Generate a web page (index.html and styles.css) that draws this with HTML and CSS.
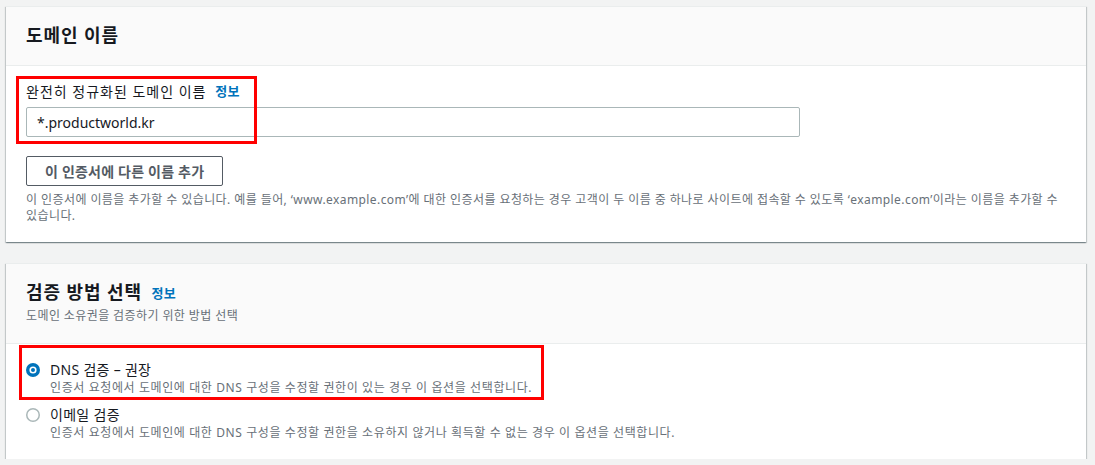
FILE: index.html
```html
<!DOCTYPE html>
<html lang="ko">
	<head>
		<meta charset="UTF-8">
		<meta name="viewport" content="width=device-width, initial-scale=1.0">
		<title>인증서 요청</title>
		<link rel="stylesheet" href="styles.css">
	</head>
	<body>
		<main class="page">
			<section class="card">
				<header class="card-head">
					<h2>도메인 이름</h2>
				</header>
				<div class="card-body">
					<div class="field">
						<span class="mark mark-name"></span>
						<label class="field-label" for="domain">완전히 정규화된 도메인 이름 <a class="info" href="#">정보</a></label>
						<input class="text-input" type="text" id="domain" value="*.productworld.kr">
					</div>
					<button class="btn">이 인증서에 다른 이름 추가</button>
					<p class="hint">이 인증서에 이름을 추가할 수 있습니다. 예를 들어, ‘www.example.com’에 대한 인증서를 요청하는 경우 고객이 두 이름 중 하나로 사이트에 접속할 수 있도록 ‘example.com’이라는 이름을 추가할 수 있습니다.</p>
				</div>
			</section>

			<section class="card">
				<header class="card-head">
					<h2>검증 방법 선택 <a class="info" href="#">정보</a></h2>
					<p class="card-sub">도메인 소유권을 검증하기 위한 방법 선택</p>
				</header>
				<div class="card-body options">
					<label class="option">
						<span class="mark mark-dns"></span>
						<span class="radio">
							<svg width="14" height="14" viewBox="0 0 14 14"><circle cx="7" cy="7" r="7" fill="#0073bb"/><circle cx="7" cy="7" r="3.6" fill="#fff"/><circle cx="7" cy="7" r="2" fill="#0073bb"/></svg>
						</span>
						<span class="option-text">
							<span class="option-title">DNS 검증 – 권장</span>
							<span class="option-desc">인증서 요청에서 도메인에 대한 DNS 구성을 수정할 권한이 있는 경우 이 옵션을 선택합니다.</span>
						</span>
					</label>
					<label class="option">
						<span class="radio">
							<svg width="14" height="14" viewBox="0 0 14 14"><circle cx="7" cy="7" r="6.25" fill="#fff" stroke="#aab7b8" stroke-width="1.5"/></svg>
						</span>
						<span class="option-text">
							<span class="option-title">이메일 검증</span>
							<span class="option-desc">인증서 요청에서 도메인에 대한 DNS 구성을 수정할 권한을 소유하지 않거나 획득할 수 없는 경우 이 옵션을 선택합니다.</span>
						</span>
					</label>
				</div>
			</section>
		</main>
	</body>
</html>
```

FILE: styles.css
```css
body {
	margin: 0;
	background-color: #f2f3f3;
	font-family: "Noto Sans", "Noto Sans CJK KR", sans-serif;
	color: #16191f;
}

.page {
	display: flex;
	flex-direction: column;
	gap: 21px;
	width: 1080px;
	padding: 6px 0 0 6px;
}

.card {
	background-color: #fff;
	border-top: 1px solid #eaeded;
	box-shadow: 0 1px 1px 0 rgba(0, 28, 36, 0.3), 1px 1px 1px 0 rgba(0, 28, 36, 0.15), -1px 1px 1px 0 rgba(0, 28, 36, 0.15);
}

.card-head {
	background-color: #fafafa;
	border-bottom: 1px solid #eaeded;
	padding: 17px 20px 19px;
}

.card-head h2 {
	margin: 0;
	font-size: 18px;
	line-height: 22px;
	font-weight: 700;
	letter-spacing: 0.9px;
}

.card-sub {
	margin: 4px 0 0;
	font-size: 12px;
	line-height: 16px;
	color: #687078;
	letter-spacing: 0.4px;
}

.info {
	color: #0073bb;
	font-size: 13px;
	font-weight: 700;
	letter-spacing: 0.3px;
	text-decoration: none;
	margin-left: 4px;
	vertical-align: 1px;
}

.card-body {
	position: relative;
	padding: 15px 20px 18px;
}

.field {
	position: relative;
	display: flex;
	flex-direction: column;
	gap: 5px;
}

.field-label {
	font-size: 14px;
	line-height: 20px;
	letter-spacing: 1px;
}

.text-input {
	width: 774px;
	height: 30px;
	box-sizing: border-box;
	border: 1px solid #aab7b8;
	border-radius: 2px;
	padding: 4px 10px;
	font-family: inherit;
	font-size: 14px;
	color: #16191f;
}

.btn {
	display: block;
	margin-top: 19px;
	height: 30px;
	padding: 0 18px;
	background-color: #fff;
	border: 1px solid #545b64;
	border-radius: 2px;
	font-family: inherit;
	font-size: 14px;
	font-weight: 700;
	letter-spacing: 0.2px;
	color: #545b64;
}

.hint {
	margin: 6px 0 0;
	font-size: 12px;
	line-height: 16px;
	letter-spacing: 0.42px;
	color: #687078;
}

.mark {
	position: absolute;
	border: 3px solid #f00;
	box-sizing: border-box;
	pointer-events: none;
}

.mark-name {
	top: -5px;
	left: -10px;
	width: 241px;
	height: 68px;
}

.options {
	display: flex;
	flex-direction: column;
	gap: 9px;
	padding-top: 16px;
	padding-bottom: 18px;
}

.option {
	position: relative;
	display: flex;
	gap: 10px;
}

.radio {
	display: flex;
	height: 20px;
	align-items: center;
}

.option-text {
	display: flex;
	flex-direction: column;
}

.option-title {
	font-size: 14px;
	line-height: 20px;
	letter-spacing: 0.3px;
}

.option-desc {
	font-size: 12px;
	line-height: 16px;
	letter-spacing: 0.6px;
	color: #687078;
}

.mark-dns {
	top: -15px;
	left: -7px;
	width: 525px;
	height: 55px;
}
```
